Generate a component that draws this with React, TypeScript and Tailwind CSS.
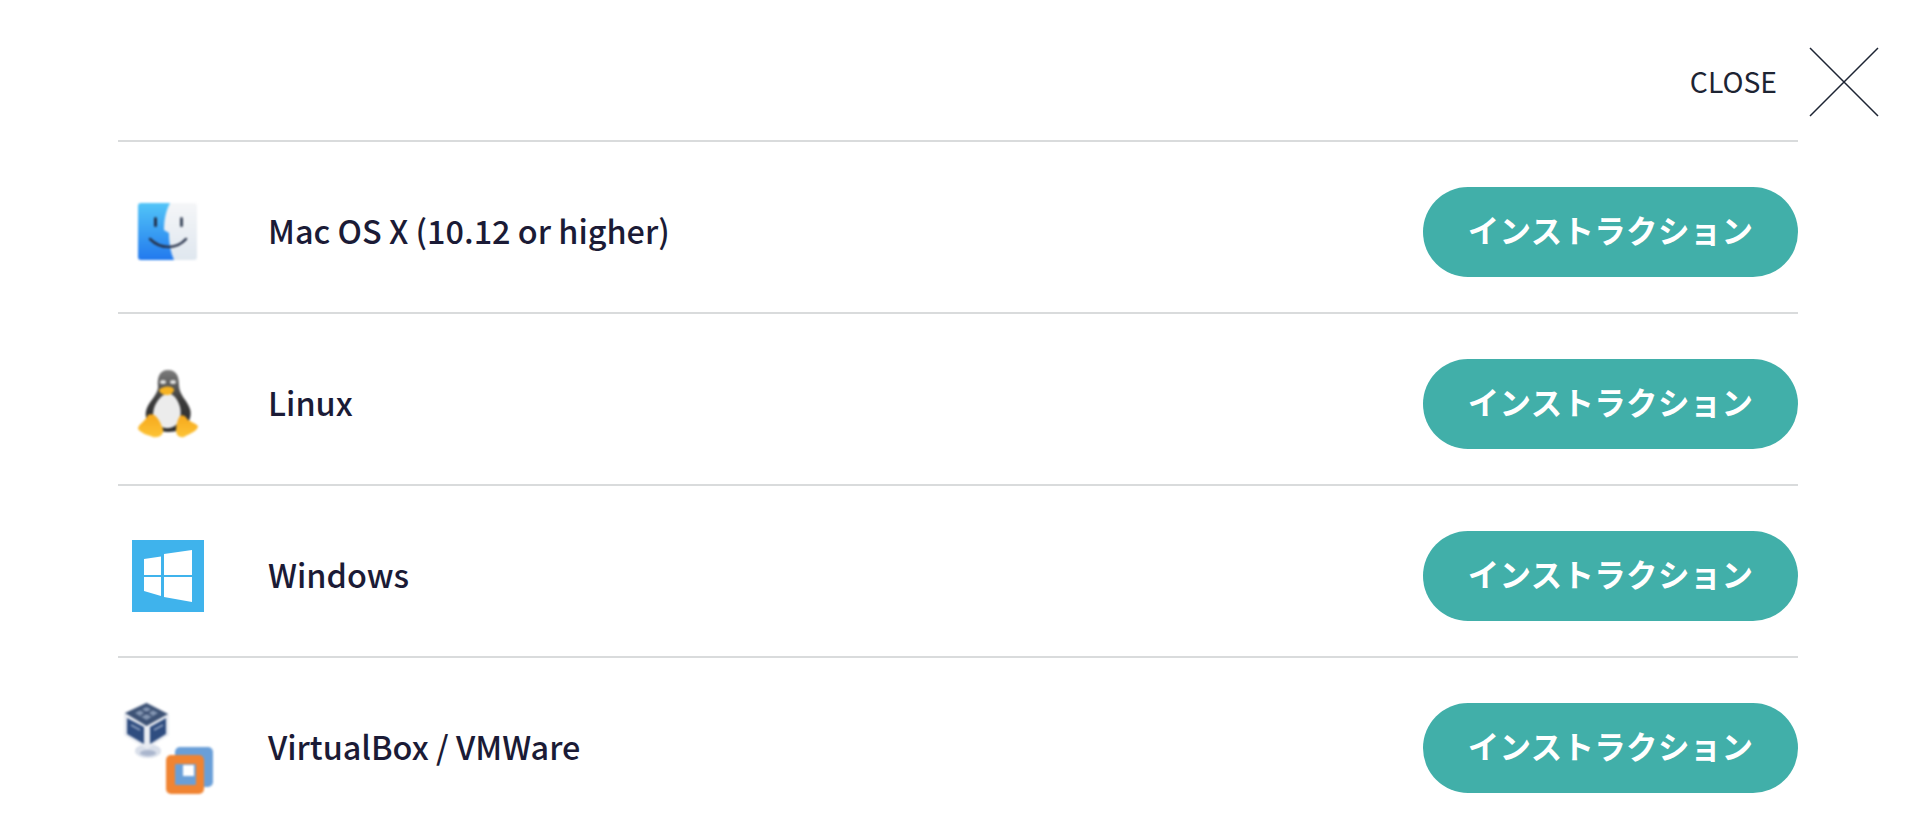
const font = "[font-family:'Noto_Sans_CJK_JP','Noto_Sans',sans-serif]";

function Finder() {
  return (
    <svg width="60" height="58" viewBox="0 0 60 58" className="ml-[20px] blur-[1px]">
      <defs>
        <linearGradient id="fb" x1="0" y1="0" x2="0" y2="1">
          <stop offset="0" stopColor="#52c5f8" />
          <stop offset="1" stopColor="#2279ee" />
        </linearGradient>
        <linearGradient id="fw" x1="0" y1="0" x2="0" y2="1">
          <stop offset="0" stopColor="#f5f6f8" />
          <stop offset="1" stopColor="#dfe7ef" />
        </linearGradient>
      </defs>
      <rect x="0" y="0" width="59" height="57" rx="3" fill="url(#fw)" />
      <path d="M3 0H32C28 8 26 16 26 27 L31 30C31 38 32 48 36 57H3C1 57 0 56 0 54V3C0 1 1 0 3 0Z" fill="url(#fb)" />
      <rect x="16" y="14" width="3" height="10" rx="1.5" fill="#23304a" />
      <rect x="42" y="14" width="3" height="10" rx="1.5" fill="#3e4a5e" />
      <path d="M12 36C22 46 38 47 48 36" fill="none" stroke="#27324a" strokeWidth="2.500" strokeLinecap="round" />
    </svg>
  );
}

function Tux() {
  return (
    <svg width="62" height="70" viewBox="0 0 62 70" className="ml-[20px] blur-[1px]">
      <defs>
        <linearGradient id="tb" x1="0" y1="0" x2="0" y2="1">
          <stop offset="0" stopColor="#7c7c7c" />
          <stop offset="0.5" stopColor="#3a3a3a" />
          <stop offset="1" stopColor="#2c2c2c" />
        </linearGradient>
        <linearGradient id="tf" x1="0" y1="0" x2="0" y2="1">
          <stop offset="0" stopColor="#f6a81c" />
          <stop offset="1" stopColor="#fdc436" />
        </linearGradient>
      </defs>
      <path d="M30 1C21 1 19 9 20 18C20 26 10 33 8 42C6 52 14 62 30 63C48 63 55 50 52 40C49 31 41 26 41 16C41 8 39 1 30 1Z" fill="url(#tb)" />
      <path d="M30 24C20 27 15 38 15 46C16 56 24 60 32 59C42 57 44 46 42 38C40 31 36 25 30 24Z" fill="#ececec" />
      <ellipse cx="25" cy="13" rx="3" ry="2" fill="#e0e0e0" />
      <ellipse cx="35" cy="13" rx="3" ry="2" fill="#e0e0e0" />
      <path d="M21 21C24 17 33 16 36 20C36 24 32 26 29 26C26 26 22 25 21 21Z" fill="#f7b322" />
      <path d="M10 46C17 43 21 50 25 60C26 66 21 69 15 68C10 66 4 65 0 60C0 55 8 52 10 46Z" fill="url(#tf)" />
      <path d="M42 47C46 45 48 48 50 51C53 53 57 54 60 57C60 62 51 65 46 68C41 69 38 66 38 61C38 55 40 50 42 47Z" fill="url(#tf)" />
    </svg>
  );
}

function Win() {
  return (
    <svg width="72" height="72" viewBox="0 0 72 72" className="ml-[14px]">
      <rect width="72" height="72" fill="#3fb3ec" />
      <path d="M12 19L29 16.500V35H12Z" fill="#ffffff" className="blur-[0.7px]" />
      <path d="M32 14L60 10V35H32Z" fill="#ffffff" className="blur-[0.7px]" />
      <path d="M12 37H29V56L12 51Z" fill="#ffffff" className="blur-[0.7px]" />
      <path d="M32 37H60V62L32 57Z" fill="#ffffff" className="blur-[0.7px]" />
    </svg>
  );
}

function VBoxVmware() {
  return (
    <svg width="96" height="100" viewBox="0 0 96 100" className="ml-[4px] blur-[0.8px]">
      <ellipse cx="26" cy="53" rx="13" ry="7" fill="#d9dfea" />
      <ellipse cx="26" cy="55" rx="8" ry="3" fill="#aab6cd" />
      <path d="M24.500 4L47 16V37L25 51L2 37V15Z" fill="#e9ecf2" />
      <path d="M24.500 5L46 16L24.500 28L3 15Z" fill="#3d5275" />
      <path d="M13 15L24.500 9L36 15L24.500 22Z" fill="#8496b2" />
      <path d="M19 12L30 18M30 12L19 18" stroke="#33476a" strokeWidth="1.500" />
      <path d="M5 20L22 29V46L5 36Z" fill="#2f4d80" />
      <path d="M28 29L44 20V36L28 46Z" fill="#2f4d80" />
      <path d="M9 27L18 32M32 32L41 27" stroke="#8ea0bf" strokeWidth="2" />
      <rect x="53" y="49" width="38" height="40" rx="5" fill="#6a9fd8" />
      <rect x="44" y="57" width="38" height="39" rx="5" fill="#f08432" />
      <rect x="53" y="66" width="21" height="21" rx="1" fill="#6a9fd8" />
      <rect x="61" y="67" width="11" height="11" fill="#ffffff" />
    </svg>
  );
}

function Row({ icon, label }: { icon: React.ReactNode; label: string }) {
  return (
    <div className="flex h-[172px] items-center border-t-2 border-[#d9dbdc] pt-[10px]">
      <div className="flex w-[150px] items-center">{icon}</div>
      <div className="flex-1 pb-[4px] text-[32.4px] font-medium text-[#1b1b36]">{label}</div>
      <button className="h-[90px] w-[375px] rounded-full bg-[#41afa9] pb-[4px] text-[31.5px] font-bold tracking-[0.01em] text-white">
        インストラクション
      </button>
    </div>
  );
}

export default function App() {
  return (
    <div className={`h-[828px] w-[1914px] overflow-hidden bg-white ${font}`}>
      <div className="flex h-[140px] items-center justify-end pt-[24px] pr-[35px]">
        <span className="mr-[32px] pb-[2px] text-[28.3px] text-[#1d2433]">CLOSE</span>
        <svg width="70" height="70" viewBox="0 0 70 70" className="mb-[1px]">
          <path d="M1 1L69 69M69 1L1 69" stroke="#1d2433" strokeWidth="1.500" />
        </svg>
      </div>
      <div className="ml-[118px] w-[1680px]">
        <Row icon={<Finder />} label="Mac OS X (10.12 or higher)" />
        <Row icon={<Tux />} label="Linux" />
        <Row icon={<Win />} label="Windows" />
        <Row icon={<VBoxVmware />} label="VirtualBox / VMWare" />
      </div>
    </div>
  );
}
